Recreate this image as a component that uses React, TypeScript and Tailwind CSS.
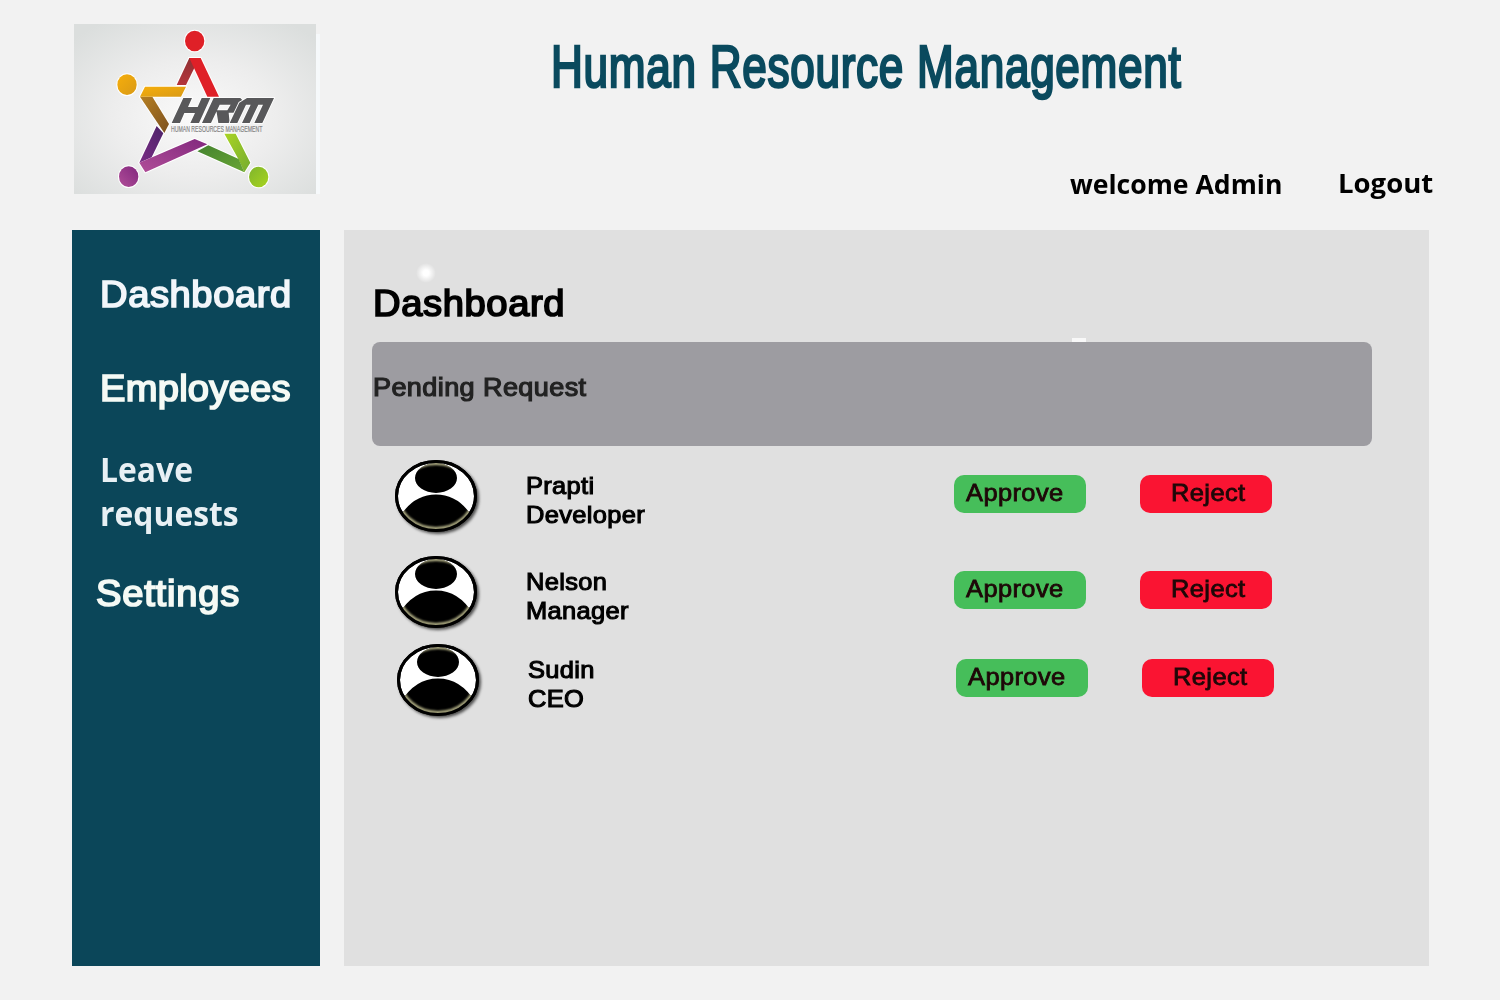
import type { ReactNode } from 'react';

const rounded =
  "block origin-left scale-x-[1.06] whitespace-nowrap font-['Liberation_Sans',sans-serif] [stroke-linejoin:round]";
const humanist = "block origin-left whitespace-nowrap font-['Open_Sans',sans-serif] font-bold";

function StarShapes() {
  return (
    <>
      <ellipse cx="392" cy="75" rx="29" ry="31" fill="#df2027" />
      <ellipse cx="189" cy="206" rx="29" ry="31" fill="url(#gold)" />
      <ellipse cx="194" cy="482" rx="29" ry="31" fill="url(#purple)" />
      <ellipse cx="584" cy="483" rx="29" ry="31" fill="url(#limeHead)" />
      <path d="M376 126H388L394 150 366 207H338Z" fill="url(#darkRed)" />
      <path d="M376 126H410L465 242H430Z" fill="#df2027" />
      <path d="M228 242H265L315 324 301 351Z" fill="url(#brown)" />
      <path d="M243 212H366L351 242H228Z" fill="url(#gold)" />
      <path d="M278 330 298 352 263 424 226 440Z" fill="url(#violet)" />
      <path d="M226 440 392 369 430 385 244 469Z" fill="url(#purple)" />
      <path d="M481 353H515L559 440 541 469 523 429Z" fill="url(#lime)" />
      <path d="M400 406 433 388 524 429 541 469Z" fill="url(#green)" />
    </>
  );
}

function Logo() {
  return (
    <svg viewBox="30 24 726 510" className="block h-[170px] w-[242px]" preserveAspectRatio="none">
      <defs>
        <radialGradient id="card" cx="0.5" cy="0.55" r="0.68">
          <stop offset="0" stopColor="#fafafa" />
          <stop offset="0.5" stopColor="#ededed" />
          <stop offset="1" stopColor="#dbdedd" />
        </radialGradient>
        <linearGradient id="darkRed" x1="0" y1="0" x2="0" y2="1">
          <stop offset="0" stopColor="#8f2f32" />
          <stop offset="1" stopColor="#b5353b" />
        </linearGradient>
        <linearGradient id="gold" x1="0" y1="0" x2="1" y2="1">
          <stop offset="0" stopColor="#f6ae0b" />
          <stop offset="1" stopColor="#d99a16" />
        </linearGradient>
        <linearGradient id="brown" x1="0" y1="0" x2="1" y2="1">
          <stop offset="0" stopColor="#b67f22" />
          <stop offset="1" stopColor="#7d5220" />
        </linearGradient>
        <linearGradient id="violet" x1="1" y1="0" x2="0" y2="1">
          <stop offset="0" stopColor="#4d2369" />
          <stop offset="1" stopColor="#7a2c85" />
        </linearGradient>
        <linearGradient id="purple" x1="0" y1="1" x2="1" y2="0">
          <stop offset="0" stopColor="#b04d98" />
          <stop offset="1" stopColor="#82287e" />
        </linearGradient>
        <linearGradient id="lime" x1="0" y1="0" x2="1" y2="1">
          <stop offset="0" stopColor="#aad425" />
          <stop offset="1" stopColor="#74ab30" />
        </linearGradient>
        <linearGradient id="limeHead" x1="0" y1="0" x2="1" y2="1">
          <stop offset="0" stopColor="#7fb52c" />
          <stop offset="1" stopColor="#a8d41f" />
        </linearGradient>
        <linearGradient id="green" x1="0" y1="0" x2="1" y2="1">
          <stop offset="0" stopColor="#44832f" />
          <stop offset="1" stopColor="#69a535" />
        </linearGradient>
      </defs>
      <rect x="30" y="24" width="726" height="510" fill="url(#card)" />
      <g stroke="#fff" strokeWidth="6" strokeLinejoin="round">
        <StarShapes />
      </g>
      <StarShapes />
      <g stroke="#fff" strokeWidth="5" paintOrder="stroke" fill="#58585a">
        <path d="M358 246H384L372 273H401L413 246H439L405 321H379L393 291H361L348 321H323Z" />
        <path d="M449 246H529L537 254 520 290H494L497 321H463L457 283H490L500 266H467L441 321H414Z" />
        <path d="M549 246H630L595 321H571L597 266H583L557 321H534L560 266H546L520 321H497L526 260Z" />
      </g>
      <text
        transform="translate(321 347) scale(0.573 1)"
        fontFamily="Liberation Sans"
        fontSize="27"
        fill="#858585"
        stroke="#858585"
        strokeWidth="0.6"
      >
        HUMAN RESOURCES MANAGEMENT
      </text>
    </svg>
  );
}

function Avatar() {
  return (
    <svg viewBox="0 0 92 82" className="block h-[82px] w-[92px] shrink-0">
      <defs>
        <clipPath id="figure">
          <ellipse cx="41" cy="18" rx="21" ry="15" />
          <path d="M4 58Q18 34.5 41 34.5T78 58L60 75H22Z" />
        </clipPath>
        <filter id="shadow" x="-20%" y="-20%" width="150%" height="150%">
          <feDropShadow dx="2" dy="2" stdDeviation="1.8" floodOpacity="0.65" />
        </filter>
        <filter id="soft" x="-10%" y="-10%" width="120%" height="120%">
          <feGaussianBlur stdDeviation="1.1" />
        </filter>
      </defs>
      <ellipse cx="41" cy="36" rx="39.5" ry="34.5" fill="#fff" stroke="#000" strokeWidth="3" filter="url(#shadow)" />
      <g clipPath="url(#figure)">
        <ellipse cx="41" cy="36" rx="39.5" ry="34.5" />
        <ellipse cx="41" cy="36" rx="37.5" ry="32.5" fill="none" stroke="#bab88c" strokeWidth="3" filter="url(#soft)" />
      </g>
      <ellipse cx="41" cy="36" rx="39.5" ry="34.5" fill="none" stroke="#000" strokeWidth="3" />
    </svg>
  );
}

function Action({ className, children }: { className: string; children: ReactNode }) {
  return (
    <button className={`h-[38px] w-[132px] rounded-[10px] pt-[3px] pb-1.5 text-left text-[#1e0808] ${className}`}>
      <span
        className={`${rounded} text-[24px] leading-[29px] tracking-[0.016em] [-webkit-text-stroke:0.8px_#1e0808]`}
      >
        {children}
      </span>
    </button>
  );
}

function Request({ name, role, className }: { name: string; role: string; className: string }) {
  return (
    <li className={`flex items-start ${className}`}>
      <Avatar />
      <div className="ml-[39px] w-[428px] pt-[11px] text-[24px] leading-[29px] tracking-[0.013em] text-black">
        <p className={`${rounded} [-webkit-text-stroke:1.1px_#000]`}>{name}</p>
        <p className={`${rounded} [-webkit-text-stroke:1.1px_#000]`}>{role}</p>
      </div>
      <div className="flex gap-[54px] pt-[15px]">
        <Action className="bg-[#46be5a] pl-3">Approve</Action>
        <Action className="bg-[#fa1432] pl-[31px]">Reject</Action>
      </div>
    </li>
  );
}

export default function App() {
  return (
    <div className="h-[1000px] w-[1500px] overflow-hidden bg-[#f2f2f2]">
      <header className="flex h-[230px] pt-6 pl-[74px]">
        <div className="flex h-[170px] items-end">
          <Logo />
          <div className="h-40 w-1 bg-[#f6f9fb]" />
        </div>
        <div className="w-[1180px]">
          <h1 className="mt-2 ml-[231px] w-[700px] origin-left scale-x-[0.735] font-['Liberation_Sans',sans-serif] text-[60px] leading-[70px] tracking-[0.016em] whitespace-nowrap text-[#0a4a5e] [-webkit-text-stroke:2.6px_#0a4a5e]">
            Human Resource Management
          </h1>
          <div className="mt-[61px] ml-[750px] flex text-black">
            <span className={`${humanist} w-[268px] scale-x-[0.985] text-[27px] leading-[42px]`}>welcome Admin</span>
            <button className={`${humanist} self-start scale-x-[1.02] text-[27px] leading-10`}>Logout</button>
          </div>
        </div>
      </header>

      <div className="flex gap-6 pl-[72px]">
        <nav className="h-[736px] w-[248px] bg-[#0b4659] pt-[43px] pl-7 text-[36px] leading-[44px]">
          <a className={`${rounded} tracking-[0.015em] text-[#f2f6fa] [-webkit-text-stroke:1.7px_#f2f6fa]`}>
            Dashboard
          </a>
          <a className={`${rounded} mt-[50px] tracking-[0.006em] text-[#f5faf5] [-webkit-text-stroke:1.7px_#f5faf5]`}>
            Employees
          </a>
          <a className={`${humanist} mt-9 scale-x-[0.937] text-[34px] text-[#e8f0f4]`}>
            Leave
            <br />
            requests
          </a>
          <a
            className={`${rounded} -ml-1 mt-[37px] tracking-[0.02em] text-[#f5faf5] [-webkit-text-stroke:1.7px_#f5faf5]`}
          >
            Settings
          </a>
        </nav>

        <main className="relative h-[736px] w-[1085px] bg-[#e0e0e0] pt-[52px] pl-7">
          <div className="absolute top-[33px] left-[72px] size-5 rounded-full bg-radial from-white from-20% to-transparent to-70%" />
          <div className="absolute top-[108px] left-[728px] h-1 w-3.5 bg-[#f8f8f8]" />
          <h2
            className={`${rounded} ml-px text-[36px] leading-[44px] tracking-[0.016em] text-black [-webkit-text-stroke:1.7px_#000]`}
          >
            Dashboard
          </h2>
          <div className="mt-4 h-[104px] w-[1000px] rounded-lg bg-[#9d9ca1] pt-[29px]">
            <h3
              className={`${rounded} ml-px text-[25.5px] leading-8 tracking-[0.015em] text-[#222] [-webkit-text-stroke:1.2px_#222]`}
            >
              Pending Request
            </h3>
          </div>
          <ul className="mt-3.5 pl-[23px]">
            <Request className="h-24" name="Prapti" role="Developer" />
            <Request className="h-[88px]" name="Nelson" role="Manager" />
            <Request className="ml-0.5 h-[88px]" name="Sudin" role="CEO" />
          </ul>
        </main>
      </div>
    </div>
  );
}
